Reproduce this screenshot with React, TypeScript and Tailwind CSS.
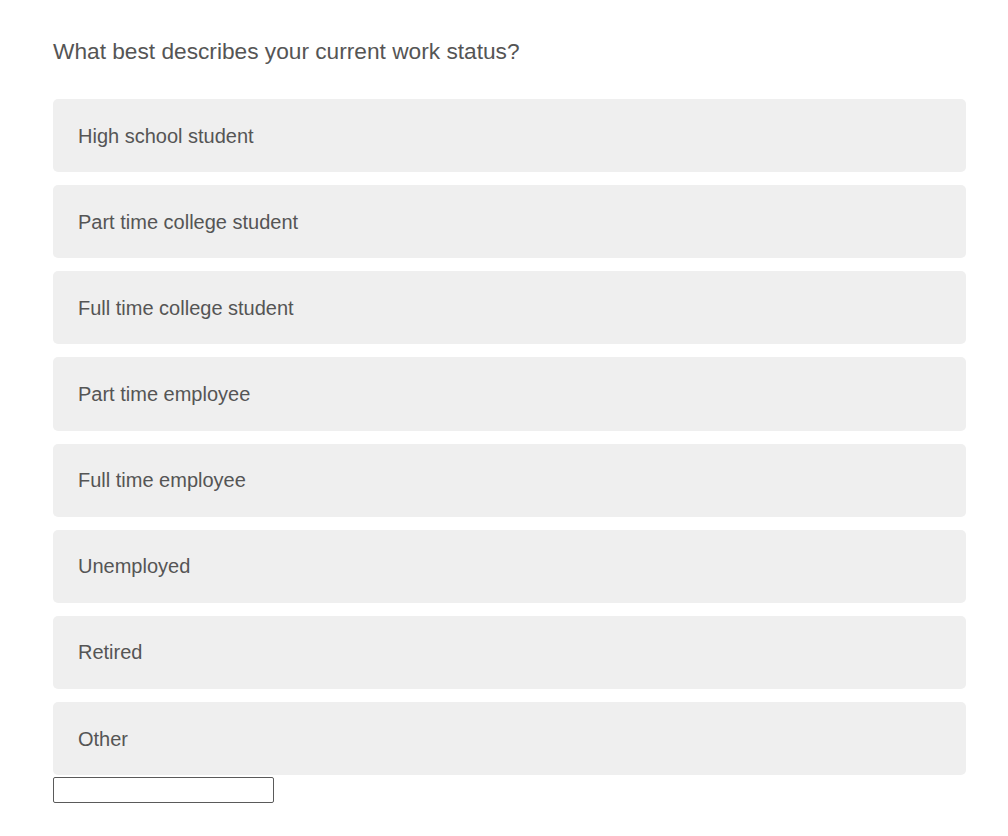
import React from "react";

const options = [
  "High school student",
  "Part time college student",
  "Full time college student",
  "Part time employee",
  "Full time employee",
  "Unemployed",
  "Retired",
  "Other",
];

export default function App() {
  return (
    <div className="min-h-[836px] w-[1008px] bg-white pl-[53px] pr-[42px] pt-[38px] font-['Liberation_Sans',Arial,sans-serif]">
      <p className="text-[22.7px] leading-[26px] text-[#555]">What best describes your current work status?</p>
      <div className="mt-[35px] flex flex-col gap-[13px]">
        {options.map((o) => (
          <div key={o} className="flex h-[73.15px] items-center rounded-[5px] bg-[#efefef] pl-[25px] text-[20px] text-[#555]">
            {o}
          </div>
        ))}
      </div>
      <input type="text" className="mt-[2px] block h-[26px] w-[221px] rounded-[2px] border-[1.5px] border-[#5a5a5a] bg-white" />
    </div>
  );
}
